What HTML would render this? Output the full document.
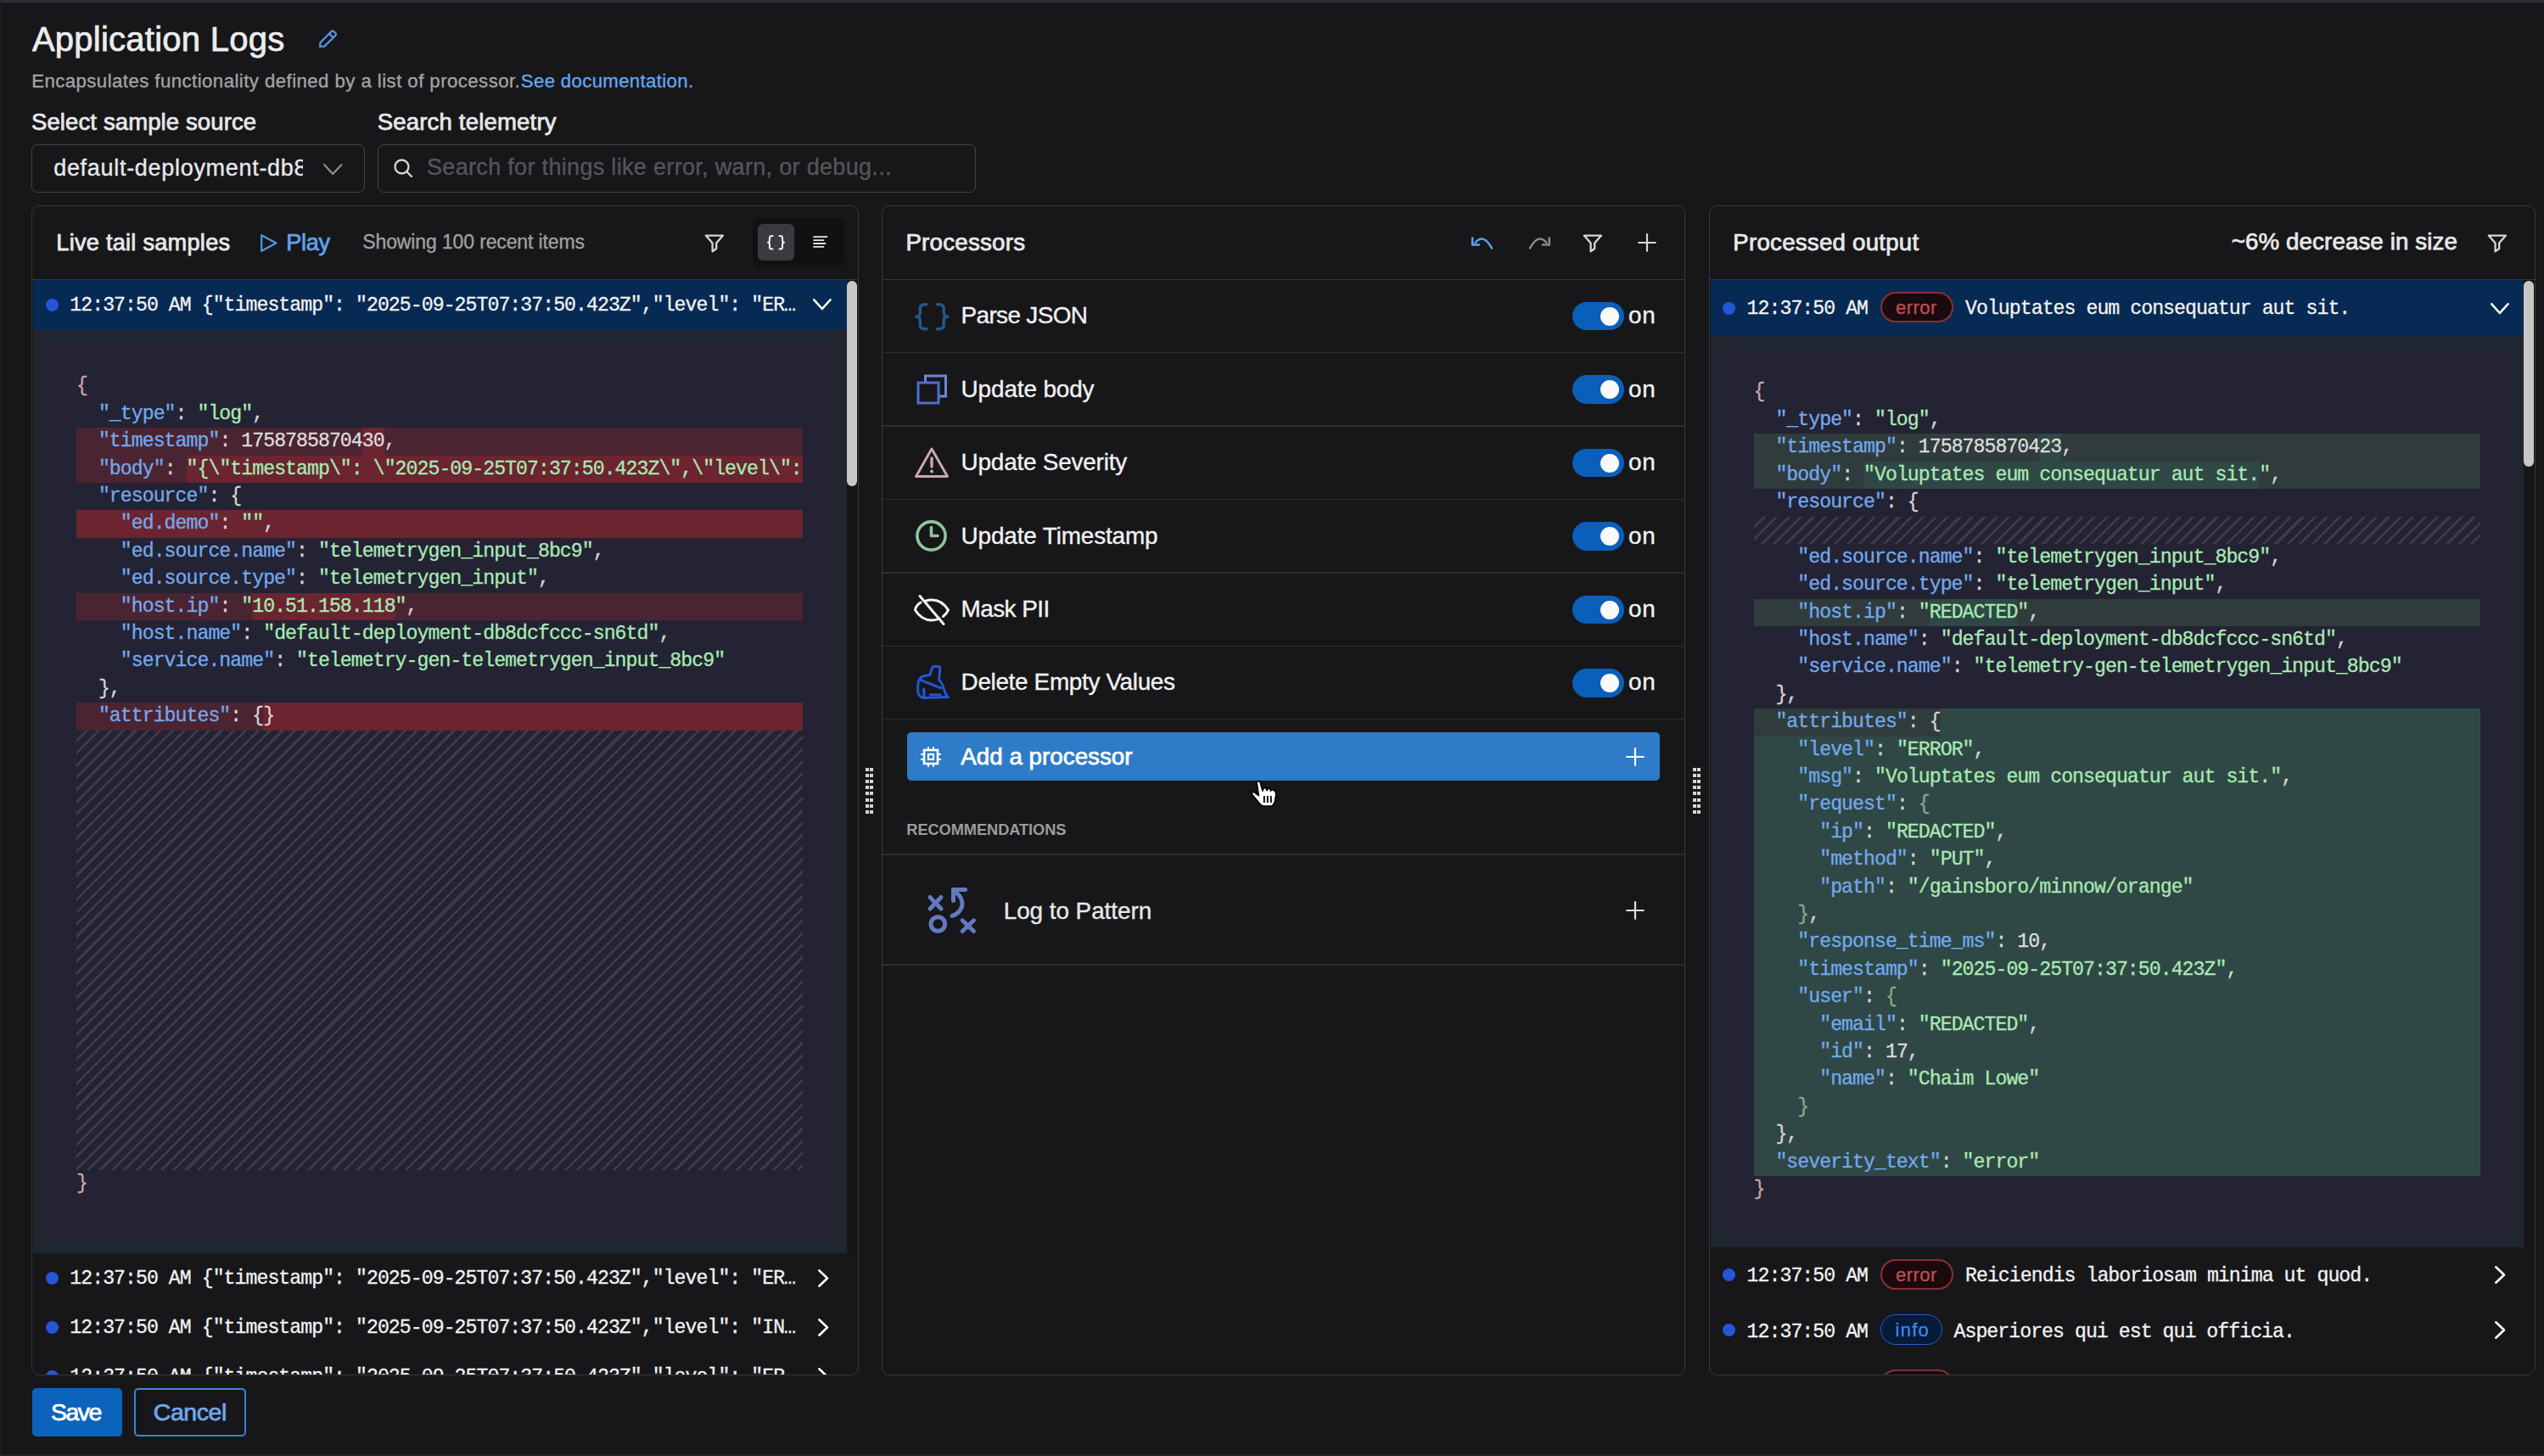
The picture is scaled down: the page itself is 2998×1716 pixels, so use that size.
<!DOCTYPE html>
<html><head><meta charset="utf-8"><title>Application Logs</title><style>
*{box-sizing:border-box}
html,body{margin:0;padding:0;width:2998px;height:1716px;overflow:hidden;background:#17171a}
body{position:relative;font-family:'Liberation Sans', sans-serif}
.t{position:absolute;line-height:0;white-space:pre;font-family:'Liberation Sans', sans-serif}
.m{position:absolute;line-height:0;white-space:pre;font-family:'Liberation Mono', monospace;font-size:23.2px;letter-spacing:-0.9639px;overflow:visible;-webkit-text-stroke:0.3px currentColor}
.br{color:#cfa6a6}
.hl{position:absolute}
.hatch{position:absolute;background:repeating-linear-gradient(135deg, transparent 0 7.2px, #3b3b4b 7.2px 10.2px)}
.box{position:absolute}
.ic{position:absolute;overflow:visible}
.dot{position:absolute;border-radius:50%;background:#2456d6}
.clip{position:absolute;overflow:hidden}
</style></head>
<body>
<div class=box style="left:0;top:0;width:2998px;height:2.5px;background:#2c3034"></div>
<div class=box style="left:0;top:0;width:1px;height:1716px;background:#222326"></div>
<div class=t style="left:37.90px;top:46.00px;font-size:40px;font-weight:400;letter-spacing:0.251px;color:#ececec;-webkit-text-stroke:0.75px #ececec;">Application Logs</div>
<svg class=ic style="left:374px;top:34px" width="25" height="24" viewBox="0 0 25 24"><path d="M3 21 L3.6 16 L16.5 3.1 Q18 1.8 19.4 3.1 L21.3 5 Q22.6 6.4 21.3 7.9 L8.3 20.6 Z M14 5.6 L18.8 10.4" fill="none" stroke="#4f95e4" stroke-width="2.2" stroke-linejoin="round"/></svg>
<div class=t style="left:37.20px;top:96.00px;font-size:22.2px;font-weight:400;letter-spacing:0.447px;color:#a3a3a3;-webkit-text-stroke:0.35px #a3a3a3;">Encapsulates functionality defined by a list of processor.</div>
<div class=t style="left:613.80px;top:96.00px;font-size:22.2px;font-weight:400;letter-spacing:0.347px;color:#62a6ef;-webkit-text-stroke:0.35px #62a6ef;">See documentation.</div>
<div class=t style="left:37.00px;top:144.00px;font-size:27.5px;font-weight:400;letter-spacing:0.115px;color:#e8e8e8;-webkit-text-stroke:0.75px #e8e8e8;">Select sample source</div>
<div class=t style="left:444.70px;top:144.00px;font-size:27.5px;font-weight:400;letter-spacing:0.199px;color:#e8e8e8;-webkit-text-stroke:0.75px #e8e8e8;">Search telemetry</div>
<div class=box style="left:37px;top:170px;width:393px;height:57px;border:1.6px solid #424347;border-radius:7px"></div>
<div class=clip style="left:0;top:0;width:357px;height:230px"><div class=t style="left:63.20px;top:198.00px;font-size:27px;font-weight:400;letter-spacing:0.700px;color:#e8e8e8;-webkit-text-stroke:0.35px #e8e8e8;">default-deployment-db8dcfccc</div></div>
<svg class=ic style="left:380.8px;top:193.4px" width="22.5" height="15" viewBox="0 0 22.5 15"><polyline points="1.2,1.2 11.25,12 21.3,1.2" fill="none" stroke="#8d8d8f" stroke-width="2.4" stroke-linecap="round" stroke-linejoin="round"/></svg>
<div class=box style="left:445px;top:170px;width:705px;height:57px;border:1.6px solid #424347;border-radius:7px"></div>
<svg class=ic style="left:463px;top:186px" width="25" height="25" viewBox="0 0 25 25"><circle cx="10.5" cy="10.5" r="8" fill="none" stroke="#d8d8d8" stroke-width="2.3"/><line x1="16.5" y1="16.5" x2="22" y2="22" stroke="#d8d8d8" stroke-width="2.3" stroke-linecap="round"/></svg>
<div class=t style="left:503.00px;top:197.00px;font-size:27px;font-weight:400;letter-spacing:0.320px;color:#54555a;-webkit-text-stroke:0.35px #54555a;">Search for things like error, warn, or debug...</div>
<div class=box style="left:37px;top:242px;width:974.5px;height:1379px;border:1.6px solid #36373b;border-radius:9px"></div>
<div class=box style="left:1039px;top:242px;width:947px;height:1379px;border:1.6px solid #36373b;border-radius:9px"></div>
<div class=box style="left:2014px;top:242px;width:973.5px;height:1379px;border:1.6px solid #36373b;border-radius:9px"></div>
<div class=box style="left:38px;top:328.6px;width:972.5px;height:1.6px;background:#36373b"></div>
<div class=box style="left:1040px;top:328.6px;width:945px;height:1.6px;background:#36373b"></div>
<div class=box style="left:2015px;top:328.6px;width:971.5px;height:1.6px;background:#36373b"></div>
<div class=t style="left:66.30px;top:286.00px;font-size:27.2px;font-weight:400;letter-spacing:0.239px;color:#e8e8e8;-webkit-text-stroke:0.75px #e8e8e8;">Live tail samples</div>
<svg class=ic style="left:306px;top:274.5px" width="22" height="23" viewBox="0 0 22 23"><path d="M2.2 2.2 L19.5 11.5 L2.2 20.8 Z" fill="none" stroke="#4f95e4" stroke-width="2.2" stroke-linejoin="round"/></svg>
<div class=t style="left:337.30px;top:286.00px;font-size:27.2px;font-weight:400;letter-spacing:-0.365px;color:#5ea2ef;-webkit-text-stroke:0.75px #5ea2ef;">Play</div>
<div class=t style="left:427.30px;top:285.00px;font-size:23px;font-weight:400;letter-spacing:-0.128px;color:#a0a0a0;-webkit-text-stroke:0.35px #a0a0a0;">Showing 100 recent items</div>
<svg class=ic style="left:830px;top:276px" width="24" height="22" viewBox="0 0 24 22"><path d="M1.8 1.6 L22 1.6 L14.2 10.5 L14.2 17 L9.6 20.3 L9.6 10.5 Z" fill="none" stroke="#d6d6d6" stroke-width="2.3" stroke-linejoin="round"/></svg>
<div class=box style="left:887px;top:257px;width:108px;height:58px;background:#111113;border-radius:8px"></div>
<div class=box style="left:893px;top:264px;width:43px;height:43px;background:#3a3b3f;border-radius:6px"></div>
<svg class=ic style="left:904.2px;top:277px" width="21" height="17.6" viewBox="0 0 21 17.6"><path d="M6.50 1.00 Q2.93 1.00 2.93 3.17 L2.93 6.34 Q2.93 8.80 1.00 8.80 Q2.93 8.80 2.93 11.26 L2.93 14.43 Q2.93 16.60 6.50 16.60 M14.50 1.00 Q18.07 1.00 18.07 3.17 L18.07 6.34 Q18.07 8.80 20.00 8.80 Q18.07 8.80 18.07 11.26 L18.07 14.43 Q18.07 16.60 14.50 16.60" fill="none" stroke="#f0f0f0" stroke-width="2.0" stroke-linecap="round" stroke-linejoin="round"/></svg>
<svg class=ic style="left:958px;top:278.4px" width="18" height="15" viewBox="0 0 18 15"><g stroke="#e6e6e6" stroke-width="1.8" stroke-linecap="round"><line x1="1" y1="1.2" x2="16.5" y2="1.2"/><line x1="1" y1="5.1" x2="12.5" y2="5.1"/><line x1="1" y1="9" x2="14.5" y2="9"/><line x1="1" y1="12.8" x2="12.5" y2="12.8"/></g></svg>
<div class=box style="left:38.6px;top:330.2px;width:959.4px;height:57.8px;background:#062a53"></div>
<div class=dot style="left:53.50px;top:351.70px;width:15.0px;height:15.0px"></div>
<div class=m style="left:82.30px;top:360.00px;color:#f2f2f2;">12:37:50 AM {&quot;timestamp&quot;: &quot;2025-09-25T07:37:50.423Z&quot;,&quot;level&quot;: &quot;ER…</div>
<svg class=ic style="left:958.4px;top:352px" width="21.8" height="15" viewBox="0 0 21.8 15"><polyline points="1.3,1.3 10.9,12 20.5,1.3" fill="none" stroke="#ffffff" stroke-width="2.6" stroke-linecap="round" stroke-linejoin="round"/></svg>
<div class=box style="left:38.6px;top:388px;width:959.4px;height:1089px;background:#1f2630"></div>
<div class=box style="left:52px;top:402px;width:932px;height:1058px;background:#232334"></div>
<div class=clip style="left:0;top:0;width:946px;height:1716px"><div class=hl style="left:90.00px;top:601.0px;width:856.00px;height:33.0px;background:#6b2430"></div>
<div class=hl style="left:90.00px;top:504.0px;width:856.00px;height:33.0px;background:#4b2431"></div>
<div class=hl style="left:426.92px;top:504.0px;width:25.92px;height:33.0px;background:#6b2430"></div>
<div class=hl style="left:90.00px;top:537.0px;width:856.00px;height:32.0px;background:#4b2431"></div>
<div class=hl style="left:219.58px;top:537.0px;width:726.42px;height:32.0px;background:#6b2430"></div>
<div class=hl style="left:90.00px;top:699.0px;width:856.00px;height:32.0px;background:#4b2431"></div>
<div class=hl style="left:297.33px;top:699.0px;width:168.46px;height:32.0px;background:#6b2430"></div>
<div class=hl style="left:90.00px;top:828.0px;width:856.00px;height:33.0px;background:#4b2431"></div>
<div class=hl style="left:310.29px;top:828.0px;width:635.71px;height:33.0px;background:#6b2430"></div>
<div class=hatch style="left:90.00px;top:860.60px;width:856.00px;height:518.40px"></div>
<div class=m style="left:90.00px;top:455.00px;width:856.00px"><span style="color:#cfa6a6">{</span></div>
<div class=m style="left:90.00px;top:488.00px;width:856.00px">  <span style="color:#74a8ec">&quot;_type&quot;</span><span style="color:#d4d4d4">:</span> <span style="color:#a9e9b3">&quot;log&quot;</span><span style="color:#d4d4d4">,</span></div>
<div class=m style="left:90.00px;top:520.00px;width:856.00px">  <span style="color:#74a8ec">&quot;timestamp&quot;</span><span style="color:#d4d4d4">:</span> <span style="color:#dcdcdc">1758785870430</span><span style="color:#d4d4d4">,</span></div>
<div class=m style="left:90.00px;top:553.00px;width:856.00px">  <span style="color:#74a8ec">&quot;body&quot;</span><span style="color:#d4d4d4">:</span> <span style="color:#a9e9b3">&quot;{\&quot;timestamp\&quot;: \&quot;2025-09-25T07:37:50.423Z\&quot;,\&quot;level\&quot;: \&quot;ERROR\&quot;}&quot;</span><span style="color:#d4d4d4">,</span></div>
<div class=m style="left:90.00px;top:585.00px;width:856.00px">  <span style="color:#74a8ec">&quot;resource&quot;</span><span style="color:#d4d4d4">:</span> <span style="color:#ddd0cf">{</span></div>
<div class=m style="left:90.00px;top:617.00px;width:856.00px">    <span style="color:#74a8ec">&quot;ed.demo&quot;</span><span style="color:#d4d4d4">:</span> <span style="color:#a9e9b3">&quot;&quot;</span><span style="color:#d4d4d4">,</span></div>
<div class=m style="left:90.00px;top:650.00px;width:856.00px">    <span style="color:#74a8ec">&quot;ed.source.name&quot;</span><span style="color:#d4d4d4">:</span> <span style="color:#a9e9b3">&quot;telemetrygen_input_8bc9&quot;</span><span style="color:#d4d4d4">,</span></div>
<div class=m style="left:90.00px;top:682.00px;width:856.00px">    <span style="color:#74a8ec">&quot;ed.source.type&quot;</span><span style="color:#d4d4d4">:</span> <span style="color:#a9e9b3">&quot;telemetrygen_input&quot;</span><span style="color:#d4d4d4">,</span></div>
<div class=m style="left:90.00px;top:715.00px;width:856.00px">    <span style="color:#74a8ec">&quot;host.ip&quot;</span><span style="color:#d4d4d4">:</span> <span style="color:#a9e9b3">&quot;10.51.158.118&quot;</span><span style="color:#d4d4d4">,</span></div>
<div class=m style="left:90.00px;top:747.00px;width:856.00px">    <span style="color:#74a8ec">&quot;host.name&quot;</span><span style="color:#d4d4d4">:</span> <span style="color:#a9e9b3">&quot;default-deployment-db8dcfccc-sn6td&quot;</span><span style="color:#d4d4d4">,</span></div>
<div class=m style="left:90.00px;top:779.00px;width:856.00px">    <span style="color:#74a8ec">&quot;service.name&quot;</span><span style="color:#d4d4d4">:</span> <span style="color:#a9e9b3">&quot;telemetry-gen-telemetrygen_input_8bc9&quot;</span></div>
<div class=m style="left:90.00px;top:812.00px;width:856.00px">  <span style="color:#ddd0cf">}</span><span style="color:#d4d4d4">,</span></div>
<div class=m style="left:90.00px;top:844.00px;width:856.00px">  <span style="color:#74a8ec">&quot;attributes&quot;</span><span style="color:#d4d4d4">:</span> <span style="color:#ddd0cf">{</span><span style="color:#ddd0cf">}</span></div>
<div class=m style="left:90.00px;top:1395.00px;width:856.00px"><span style="color:#cfa6a6">}</span></div></div>
<div class=box style="left:998px;top:330px;width:12px;height:1147px;background:#161618"></div>
<div class=box style="left:998px;top:330.5px;width:12px;height:242.5px;background:#c9c7c5;border-radius:6px"></div>
<div class=clip style="left:0;top:0;width:1011px;height:1619.5px">
<div class=dot style="left:53.50px;top:1498.50px;width:15.0px;height:15.0px"></div>
<div class=m style="left:82.30px;top:1507.00px;color:#f2f2f2;">12:37:50 AM {&quot;timestamp&quot;: &quot;2025-09-25T07:37:50.423Z&quot;,&quot;level&quot;: &quot;ER…</div>
<svg class=ic style="left:964px;top:1495.5px" width="13" height="21" viewBox="0 0 13 21"><polyline points="1.3,1.3 11,10.5 1.3,19.7" fill="none" stroke="#ffffff" stroke-width="2.6" stroke-linecap="round" stroke-linejoin="round"/></svg>
<div class=dot style="left:53.50px;top:1556.50px;width:15.0px;height:15.0px"></div>
<div class=m style="left:82.30px;top:1565.00px;color:#f2f2f2;">12:37:50 AM {&quot;timestamp&quot;: &quot;2025-09-25T07:37:50.423Z&quot;,&quot;level&quot;: &quot;IN…</div>
<svg class=ic style="left:964px;top:1553.5px" width="13" height="21" viewBox="0 0 13 21"><polyline points="1.3,1.3 11,10.5 1.3,19.7" fill="none" stroke="#ffffff" stroke-width="2.6" stroke-linecap="round" stroke-linejoin="round"/></svg>
<div class=dot style="left:53.50px;top:1614.50px;width:15.0px;height:15.0px"></div>
<div class=m style="left:82.30px;top:1623.00px;color:#f2f2f2;">12:37:50 AM {&quot;timestamp&quot;: &quot;2025-09-25T07:37:50.423Z&quot;,&quot;level&quot;: &quot;ER…</div>
<svg class=ic style="left:964px;top:1611.5px" width="13" height="21" viewBox="0 0 13 21"><polyline points="1.3,1.3 11,10.5 1.3,19.7" fill="none" stroke="#ffffff" stroke-width="2.6" stroke-linecap="round" stroke-linejoin="round"/></svg>
</div>
<div class=t style="left:1067.40px;top:286.00px;font-size:27.7px;font-weight:400;letter-spacing:0.241px;color:#e8e8e8;-webkit-text-stroke:0.75px #e8e8e8;">Processors</div>
<svg class=ic style="left:1733px;top:279px" width="28" height="16" viewBox="0 0 28 16"><path d="M5.5 7 Q15.5 -4.5 25 13.6" fill="none" stroke="#5ea2ef" stroke-width="2.4" stroke-linecap="round"/><path d="M2.2 1.5 L2.2 9.5 L10 9.5" fill="none" stroke="#5ea2ef" stroke-width="2.6" stroke-linecap="round" stroke-linejoin="round"/></svg>
<svg class=ic style="left:1800px;top:279px" width="28" height="16" viewBox="0 0 28 16"><path d="M22.5 7 Q12.5 -4.5 3 13.6" fill="none" stroke="#8a8a8a" stroke-width="2.4" stroke-linecap="round"/><path d="M25.8 1.5 L25.8 9.5 L18 9.5" fill="none" stroke="#8a8a8a" stroke-width="2.6" stroke-linecap="round" stroke-linejoin="round"/></svg>
<svg class=ic style="left:1865px;top:276px" width="24" height="22" viewBox="0 0 24 22"><path d="M1.8 1.6 L22 1.6 L14.2 10.5 L14.2 17 L9.6 20.3 L9.6 10.5 Z" fill="none" stroke="#d6d6d6" stroke-width="2.3" stroke-linejoin="round"/></svg>
<svg class=ic style="left:1930px;top:275px" width="22" height="22" viewBox="0 0 22 22"><g stroke="#d8d8d8" stroke-width="2.2" stroke-linecap="round"><line x1="11" y1="1.2" x2="11" y2="20.8"/><line x1="1.2" y1="11" x2="20.8" y2="11"/></g></svg>
<div class=box style="left:1040px;top:414.9px;width:945px;height:1.6px;background:#2d2e31"></div>
<div class=box style="left:1040px;top:501.3px;width:945px;height:1.6px;background:#2d2e31"></div>
<div class=box style="left:1040px;top:587.7px;width:945px;height:1.6px;background:#2d2e31"></div>
<div class=box style="left:1040px;top:674.1px;width:945px;height:1.6px;background:#2d2e31"></div>
<div class=box style="left:1040px;top:760.5px;width:945px;height:1.6px;background:#2d2e31"></div>
<div class=box style="left:1040px;top:846.9px;width:945px;height:1.6px;background:#2d2e31"></div>
<div class=t style="left:1132.60px;top:372.00px;font-size:27.9px;font-weight:400;letter-spacing:-0.639px;color:#f2f2f2;-webkit-text-stroke:0.35px #f2f2f2;">Parse JSON</div>
<div class=t style="left:1919.00px;top:372.00px;font-size:27.9px;font-weight:400;letter-spacing:0.789px;color:#f2f2f2;-webkit-text-stroke:0.35px #f2f2f2;">on</div>
<div class=box style="left:1853px;top:355.9px;width:60.5px;height:33.5px;border-radius:17px;background:#0a5fba"></div>
<div class=box style="left:1886px;top:361.7px;width:22px;height:22px;border-radius:50%;background:#fafafa"></div>
<div class=t style="left:1132.60px;top:459.00px;font-size:27.9px;font-weight:400;letter-spacing:-0.122px;color:#f2f2f2;-webkit-text-stroke:0.35px #f2f2f2;">Update body</div>
<div class=t style="left:1919.00px;top:459.00px;font-size:27.9px;font-weight:400;letter-spacing:0.789px;color:#f2f2f2;-webkit-text-stroke:0.35px #f2f2f2;">on</div>
<div class=box style="left:1853px;top:442.3px;width:60.5px;height:33.5px;border-radius:17px;background:#0a5fba"></div>
<div class=box style="left:1886px;top:448.1px;width:22px;height:22px;border-radius:50%;background:#fafafa"></div>
<div class=t style="left:1132.60px;top:545.00px;font-size:27.9px;font-weight:400;letter-spacing:-0.206px;color:#f2f2f2;-webkit-text-stroke:0.35px #f2f2f2;">Update Severity</div>
<div class=t style="left:1919.00px;top:545.00px;font-size:27.9px;font-weight:400;letter-spacing:0.789px;color:#f2f2f2;-webkit-text-stroke:0.35px #f2f2f2;">on</div>
<div class=box style="left:1853px;top:528.8px;width:60.5px;height:33.5px;border-radius:17px;background:#0a5fba"></div>
<div class=box style="left:1886px;top:534.6px;width:22px;height:22px;border-radius:50%;background:#fafafa"></div>
<div class=t style="left:1132.60px;top:632.00px;font-size:27.9px;font-weight:400;letter-spacing:-0.138px;color:#f2f2f2;-webkit-text-stroke:0.35px #f2f2f2;">Update Timestamp</div>
<div class=t style="left:1919.00px;top:632.00px;font-size:27.9px;font-weight:400;letter-spacing:0.789px;color:#f2f2f2;-webkit-text-stroke:0.35px #f2f2f2;">on</div>
<div class=box style="left:1853px;top:615.2px;width:60.5px;height:33.5px;border-radius:17px;background:#0a5fba"></div>
<div class=box style="left:1886px;top:621.0px;width:22px;height:22px;border-radius:50%;background:#fafafa"></div>
<div class=t style="left:1132.60px;top:718.00px;font-size:27.9px;font-weight:400;letter-spacing:-0.562px;color:#f2f2f2;-webkit-text-stroke:0.35px #f2f2f2;">Mask PII</div>
<div class=t style="left:1919.00px;top:718.00px;font-size:27.9px;font-weight:400;letter-spacing:0.789px;color:#f2f2f2;-webkit-text-stroke:0.35px #f2f2f2;">on</div>
<div class=box style="left:1853px;top:701.7px;width:60.5px;height:33.5px;border-radius:17px;background:#0a5fba"></div>
<div class=box style="left:1886px;top:707.5px;width:22px;height:22px;border-radius:50%;background:#fafafa"></div>
<div class=t style="left:1132.60px;top:804.00px;font-size:27.9px;font-weight:400;letter-spacing:-0.335px;color:#f2f2f2;-webkit-text-stroke:0.35px #f2f2f2;">Delete Empty Values</div>
<div class=t style="left:1919.00px;top:804.00px;font-size:27.9px;font-weight:400;letter-spacing:0.789px;color:#f2f2f2;-webkit-text-stroke:0.35px #f2f2f2;">on</div>
<div class=box style="left:1853px;top:788.2px;width:60.5px;height:33.5px;border-radius:17px;background:#0a5fba"></div>
<div class=box style="left:1886px;top:794.0px;width:22px;height:22px;border-radius:50%;background:#fafafa"></div>
<svg class=ic style="left:1077.5px;top:356.5px" width="40.5" height="32.5" viewBox="0 0 40.5 32.5"><path d="M14.00 1.70 Q6.30 1.70 6.30 5.85 L6.30 11.70 Q6.30 16.25 1.70 16.25 Q6.30 16.25 6.30 20.80 L6.30 26.65 Q6.30 30.80 14.00 30.80 M26.50 1.70 Q34.20 1.70 34.20 5.85 L34.20 11.70 Q34.20 16.25 38.80 16.25 Q34.20 16.25 34.20 20.80 L34.20 26.65 Q34.20 30.80 26.50 30.80" fill="none" stroke="#275789" stroke-width="3.4" stroke-linecap="round" stroke-linejoin="round"/></svg>
<svg class=ic style="left:1080px;top:441px" width="37" height="36" viewBox="0 0 37 36"><rect x="10.5" y="2" width="24" height="24" fill="none" stroke="#6d86d8" stroke-width="3"/><rect x="2" y="10" width="24" height="24" fill="#17171a" stroke="#4b6fd2" stroke-width="3"/></svg>
<svg class=ic style="left:1077px;top:526px" width="42" height="39" viewBox="0 0 42 39"><path d="M21 3 L39.5 35.5 L2.5 35.5 Z" fill="none" stroke="#c9a9a9" stroke-width="3" stroke-linejoin="round"/><line x1="21" y1="14" x2="21" y2="24" stroke="#c9a9a9" stroke-width="3.4" stroke-linecap="round"/><circle cx="21" cy="29.5" r="2" fill="#c9a9a9"/></svg>
<svg class=ic style="left:1078px;top:612px" width="39" height="39" viewBox="0 0 39 39"><circle cx="19.5" cy="19.5" r="16.6" fill="none" stroke="#8fc59c" stroke-width="3.6"/><path d="M19.5 9.5 L19.5 19.5 L27 19.5" fill="none" stroke="#8fc59c" stroke-width="3.6" stroke-linecap="round" stroke-linejoin="round"/></svg>
<svg class=ic style="left:1076px;top:700px" width="44" height="38" viewBox="0 0 44 38"><path d="M9 10 Q3 14 2.5 19 Q10 31 22 31 Q27 31 31 29" fill="none" stroke="#f2f2f2" stroke-width="3" stroke-linecap="round"/><path d="M15 8.2 Q18.5 7 22 7 Q34 7 41.5 19 Q39.5 23.5 35.5 26.5" fill="none" stroke="#f2f2f2" stroke-width="3" stroke-linecap="round"/><line x1="8" y1="2.5" x2="36" y2="35.5" stroke="#f2f2f2" stroke-width="3" stroke-linecap="round"/></svg>
<svg class=ic style="left:1079px;top:783px" width="41" height="42" viewBox="0 0 41 42"><path d="M21.5 2.4 L27.3 2.4 Q29 2.6 28.7 4.8 L27.6 18.3 Q31.5 21.5 33.8 30.5 Q35 35.5 38.3 38.6 L8.5 39.4 Q4.2 38.2 2.9 33 Q1.9 26 3.3 20.5 Q5 14.8 9.5 13.8 L16.8 12.6 L19.6 4.2 Q20.1 2.5 21.5 2.4 Z" fill="none" stroke="#2058d6" stroke-width="3" stroke-linejoin="round"/><path d="M5.2 18.2 L29.5 27.8" fill="none" stroke="#2058d6" stroke-width="3" stroke-linecap="round"/><path d="M9.8 29 L9.8 37" fill="none" stroke="#2058d6" stroke-width="3" stroke-linecap="round"/><path d="M17 35.8 L29.5 35.8" fill="none" stroke="#2058d6" stroke-width="2.6" stroke-linecap="round"/></svg>
<div class=box style="left:1069.3px;top:863.4px;width:886.7px;height:56.4px;background:#2e7bc8;border-radius:5px"></div>
<svg class=ic style="left:1084px;top:879px" width="26" height="26" viewBox="0 0 26 26"><rect x="5" y="5" width="16" height="16" fill="none" stroke="#fff" stroke-width="2.6"/><rect x="10" y="10" width="6" height="6" fill="none" stroke="#fff" stroke-width="2.2"/><g stroke="#fff" stroke-width="2"><line x1="10" y1="1" x2="10" y2="5"/><line x1="16" y1="1" x2="16" y2="5"/><line x1="10" y1="21" x2="10" y2="25"/><line x1="16" y1="21" x2="16" y2="25"/><line x1="1" y1="10" x2="5" y2="10"/><line x1="1" y1="16" x2="5" y2="16"/><line x1="21" y1="10" x2="25" y2="10"/><line x1="21" y1="16" x2="25" y2="16"/></g></svg>
<div class=t style="left:1132.30px;top:892.00px;font-size:27.7px;font-weight:400;letter-spacing:0.043px;color:#ffffff;-webkit-text-stroke:0.75px #ffffff;">Add a processor</div>
<svg class=ic style="left:1916px;top:881px" width="22" height="22" viewBox="0 0 22 22"><g stroke="#ffffff" stroke-width="2.2" stroke-linecap="round"><line x1="11" y1="1.2" x2="11" y2="20.8"/><line x1="1.2" y1="11" x2="20.8" y2="11"/></g></svg>
<div class=t style="left:1068.30px;top:978.00px;font-size:18.2px;font-weight:700;letter-spacing:-0.034px;color:#9c9c9c;">RECOMMENDATIONS</div>
<div class=box style="left:1040px;top:1006.2px;width:945px;height:1.6px;background:#2d2e31"></div>
<div class=box style="left:1040px;top:1136.2px;width:945px;height:1.6px;background:#2d2e31"></div>
<svg class=ic style="left:1092px;top:1045px" width="60" height="57" viewBox="0 0 60 57"><g stroke="#6479c0" stroke-width="5" stroke-linecap="round" stroke-linejoin="round" fill="none"><line x1="4" y1="12.5" x2="17" y2="26"/><line x1="17" y1="12.5" x2="4" y2="26"/><line x1="42.2" y1="39.8" x2="55.5" y2="52.5"/><line x1="55.5" y1="39.8" x2="42.2" y2="52.5"/><circle cx="13.3" cy="44" r="8.3"/><path d="M31.5 3.8 L38.5 10.5 Q43 16 41.5 23.5 Q39.5 31 30 34.5"/><path d="M31.5 16.5 L31.5 3.6 L45.5 3.6"/></g></svg>
<div class=t style="left:1182.70px;top:1074.00px;font-size:27.9px;font-weight:400;letter-spacing:-0.054px;color:#e8e8e8;-webkit-text-stroke:0.35px #e8e8e8;">Log to Pattern</div>
<svg class=ic style="left:1916px;top:1062px" width="22" height="22" viewBox="0 0 22 22"><g stroke="#e0e0e0" stroke-width="2.2" stroke-linecap="round"><line x1="11" y1="1.2" x2="11" y2="20.8"/><line x1="1.2" y1="11" x2="20.8" y2="11"/></g></svg>
<div class=box style="left:1019.8px;top:904.8px;width:4px;height:4px;background:#d6d6d6"></div><div class=box style="left:1025.1px;top:904.8px;width:4px;height:4px;background:#d6d6d6"></div><div class=box style="left:1019.8px;top:911.9px;width:4px;height:4px;background:#d6d6d6"></div><div class=box style="left:1025.1px;top:911.9px;width:4px;height:4px;background:#d6d6d6"></div><div class=box style="left:1019.8px;top:919.1px;width:4px;height:4px;background:#d6d6d6"></div><div class=box style="left:1025.1px;top:919.1px;width:4px;height:4px;background:#d6d6d6"></div><div class=box style="left:1019.8px;top:926.2px;width:4px;height:4px;background:#d6d6d6"></div><div class=box style="left:1025.1px;top:926.2px;width:4px;height:4px;background:#d6d6d6"></div><div class=box style="left:1019.8px;top:933.4px;width:4px;height:4px;background:#d6d6d6"></div><div class=box style="left:1025.1px;top:933.4px;width:4px;height:4px;background:#d6d6d6"></div><div class=box style="left:1019.8px;top:940.5px;width:4px;height:4px;background:#d6d6d6"></div><div class=box style="left:1025.1px;top:940.5px;width:4px;height:4px;background:#d6d6d6"></div><div class=box style="left:1019.8px;top:947.6px;width:4px;height:4px;background:#d6d6d6"></div><div class=box style="left:1025.1px;top:947.6px;width:4px;height:4px;background:#d6d6d6"></div><div class=box style="left:1019.8px;top:954.8px;width:4px;height:4px;background:#d6d6d6"></div><div class=box style="left:1025.1px;top:954.8px;width:4px;height:4px;background:#d6d6d6"></div>
<div class=box style="left:1994.8px;top:904.8px;width:4px;height:4px;background:#d6d6d6"></div><div class=box style="left:2000.1px;top:904.8px;width:4px;height:4px;background:#d6d6d6"></div><div class=box style="left:1994.8px;top:911.9px;width:4px;height:4px;background:#d6d6d6"></div><div class=box style="left:2000.1px;top:911.9px;width:4px;height:4px;background:#d6d6d6"></div><div class=box style="left:1994.8px;top:919.1px;width:4px;height:4px;background:#d6d6d6"></div><div class=box style="left:2000.1px;top:919.1px;width:4px;height:4px;background:#d6d6d6"></div><div class=box style="left:1994.8px;top:926.2px;width:4px;height:4px;background:#d6d6d6"></div><div class=box style="left:2000.1px;top:926.2px;width:4px;height:4px;background:#d6d6d6"></div><div class=box style="left:1994.8px;top:933.4px;width:4px;height:4px;background:#d6d6d6"></div><div class=box style="left:2000.1px;top:933.4px;width:4px;height:4px;background:#d6d6d6"></div><div class=box style="left:1994.8px;top:940.5px;width:4px;height:4px;background:#d6d6d6"></div><div class=box style="left:2000.1px;top:940.5px;width:4px;height:4px;background:#d6d6d6"></div><div class=box style="left:1994.8px;top:947.6px;width:4px;height:4px;background:#d6d6d6"></div><div class=box style="left:2000.1px;top:947.6px;width:4px;height:4px;background:#d6d6d6"></div><div class=box style="left:1994.8px;top:954.8px;width:4px;height:4px;background:#d6d6d6"></div><div class=box style="left:2000.1px;top:954.8px;width:4px;height:4px;background:#d6d6d6"></div>
<div class=t style="left:2042.30px;top:286.00px;font-size:27.7px;font-weight:400;letter-spacing:0.227px;color:#e8e8e8;-webkit-text-stroke:0.75px #e8e8e8;">Processed output</div>
<div class=t style="left:2629.80px;top:285.00px;font-size:27.7px;font-weight:400;letter-spacing:0.108px;color:#e8e8e8;-webkit-text-stroke:0.75px #e8e8e8;">~6% decrease in size</div>
<svg class=ic style="left:2931px;top:276px" width="24" height="22" viewBox="0 0 24 22"><path d="M1.8 1.6 L22 1.6 L14.2 10.5 L14.2 17 L9.6 20.3 L9.6 10.5 Z" fill="none" stroke="#d6d6d6" stroke-width="2.3" stroke-linejoin="round"/></svg>
<div class=box style="left:2015.6px;top:330.2px;width:958.4px;height:65.6px;background:#062a53"></div>
<div class=dot style="left:2029.50px;top:355.50px;width:15.0px;height:15.0px"></div>
<div class=m style="left:2058.60px;top:364.00px;color:#f2f2f2;">12:37:50 AM</div>
<div class=box style="left:2215.8px;top:344px;width:86.2px;height:35.8px;border-radius:18px;background:#1a0a0d;border:2px solid #8a2f35"></div>
<div class=t style="left:2234.00px;top:363.00px;font-size:22px;font-weight:400;letter-spacing:0.469px;color:#bf4d52;-webkit-text-stroke:0.35px #bf4d52;">error</div>
<div class=m style="left:2316.00px;top:364.00px;color:#f2f2f2;">Voluptates eum consequatur aut sit.</div>
<svg class=ic style="left:2935px;top:357px" width="21.8" height="15" viewBox="0 0 21.8 15"><polyline points="1.3,1.3 10.9,12 20.5,1.3" fill="none" stroke="#ffffff" stroke-width="2.6" stroke-linecap="round" stroke-linejoin="round"/></svg>
<div class=box style="left:2015.6px;top:395.8px;width:958.4px;height:1073.8px;background:#1f2630"></div>
<div class=box style="left:2029px;top:409.8px;width:931px;height:1045.8px;background:#232334"></div>
<div class=clip style="left:0;top:0;width:2922.7px;height:1716px"><div class=hl style="left:2066.50px;top:868.0px;width:856.20px;height:518.0px;background:#2f4845"></div>
<div class=hl style="left:2066.50px;top:511.0px;width:856.20px;height:33.0px;background:#2f3c3b"></div>
<div class=hl style="left:2403.42px;top:511.0px;width:25.92px;height:33.0px;background:#2f4845"></div>
<div class=hl style="left:2066.50px;top:544.0px;width:856.20px;height:32.0px;background:#2f3c3b"></div>
<div class=hl style="left:2196.08px;top:544.0px;width:466.50px;height:32.0px;background:#2f4845"></div>
<div class=hl style="left:2066.50px;top:706.0px;width:856.20px;height:32.0px;background:#2f3c3b"></div>
<div class=hl style="left:2273.83px;top:706.0px;width:103.67px;height:32.0px;background:#2f4845"></div>
<div class=hl style="left:2066.50px;top:835.0px;width:856.20px;height:33.0px;background:#2f3c3b"></div>
<div class=hl style="left:2286.79px;top:835.0px;width:635.91px;height:33.0px;background:#2f4845"></div>
<div class=hatch style="left:2066.50px;top:608.50px;width:856.20px;height:32.40px"></div>
<div class=m style="left:2066.50px;top:462.00px;width:856.20px"><span style="color:#cfa6a6">{</span></div>
<div class=m style="left:2066.50px;top:495.00px;width:856.20px">  <span style="color:#74a8ec">&quot;_type&quot;</span><span style="color:#d4d4d4">:</span> <span style="color:#a9e9b3">&quot;log&quot;</span><span style="color:#d4d4d4">,</span></div>
<div class=m style="left:2066.50px;top:527.00px;width:856.20px">  <span style="color:#74a8ec">&quot;timestamp&quot;</span><span style="color:#d4d4d4">:</span> <span style="color:#dcdcdc">1758785870423</span><span style="color:#d4d4d4">,</span></div>
<div class=m style="left:2066.50px;top:560.00px;width:856.20px">  <span style="color:#74a8ec">&quot;body&quot;</span><span style="color:#d4d4d4">:</span> <span style="color:#a9e9b3">&quot;Voluptates eum consequatur aut sit.&quot;</span><span style="color:#d4d4d4">,</span></div>
<div class=m style="left:2066.50px;top:592.00px;width:856.20px">  <span style="color:#74a8ec">&quot;resource&quot;</span><span style="color:#d4d4d4">:</span> <span style="color:#ddd0cf">{</span></div>
<div class=m style="left:2066.50px;top:657.00px;width:856.20px">    <span style="color:#74a8ec">&quot;ed.source.name&quot;</span><span style="color:#d4d4d4">:</span> <span style="color:#a9e9b3">&quot;telemetrygen_input_8bc9&quot;</span><span style="color:#d4d4d4">,</span></div>
<div class=m style="left:2066.50px;top:689.00px;width:856.20px">    <span style="color:#74a8ec">&quot;ed.source.type&quot;</span><span style="color:#d4d4d4">:</span> <span style="color:#a9e9b3">&quot;telemetrygen_input&quot;</span><span style="color:#d4d4d4">,</span></div>
<div class=m style="left:2066.50px;top:722.00px;width:856.20px">    <span style="color:#74a8ec">&quot;host.ip&quot;</span><span style="color:#d4d4d4">:</span> <span style="color:#a9e9b3">&quot;REDACTED&quot;</span><span style="color:#d4d4d4">,</span></div>
<div class=m style="left:2066.50px;top:754.00px;width:856.20px">    <span style="color:#74a8ec">&quot;host.name&quot;</span><span style="color:#d4d4d4">:</span> <span style="color:#a9e9b3">&quot;default-deployment-db8dcfccc-sn6td&quot;</span><span style="color:#d4d4d4">,</span></div>
<div class=m style="left:2066.50px;top:786.00px;width:856.20px">    <span style="color:#74a8ec">&quot;service.name&quot;</span><span style="color:#d4d4d4">:</span> <span style="color:#a9e9b3">&quot;telemetry-gen-telemetrygen_input_8bc9&quot;</span></div>
<div class=m style="left:2066.50px;top:819.00px;width:856.20px">  <span style="color:#ddd0cf">}</span><span style="color:#d4d4d4">,</span></div>
<div class=m style="left:2066.50px;top:851.00px;width:856.20px">  <span style="color:#74a8ec">&quot;attributes&quot;</span><span style="color:#d4d4d4">:</span> <span style="color:#ddd0cf">{</span></div>
<div class=m style="left:2066.50px;top:884.00px;width:856.20px">    <span style="color:#74a8ec">&quot;level&quot;</span><span style="color:#d4d4d4">:</span> <span style="color:#a9e9b3">&quot;ERROR&quot;</span><span style="color:#d4d4d4">,</span></div>
<div class=m style="left:2066.50px;top:916.00px;width:856.20px">    <span style="color:#74a8ec">&quot;msg&quot;</span><span style="color:#d4d4d4">:</span> <span style="color:#a9e9b3">&quot;Voluptates eum consequatur aut sit.&quot;</span><span style="color:#d4d4d4">,</span></div>
<div class=m style="left:2066.50px;top:948.00px;width:856.20px">    <span style="color:#74a8ec">&quot;request&quot;</span><span style="color:#d4d4d4">:</span> <span style="color:#8fa58e">{</span></div>
<div class=m style="left:2066.50px;top:981.00px;width:856.20px">      <span style="color:#74a8ec">&quot;ip&quot;</span><span style="color:#d4d4d4">:</span> <span style="color:#a9e9b3">&quot;REDACTED&quot;</span><span style="color:#d4d4d4">,</span></div>
<div class=m style="left:2066.50px;top:1013.00px;width:856.20px">      <span style="color:#74a8ec">&quot;method&quot;</span><span style="color:#d4d4d4">:</span> <span style="color:#a9e9b3">&quot;PUT&quot;</span><span style="color:#d4d4d4">,</span></div>
<div class=m style="left:2066.50px;top:1046.00px;width:856.20px">      <span style="color:#74a8ec">&quot;path&quot;</span><span style="color:#d4d4d4">:</span> <span style="color:#a9e9b3">&quot;/gainsboro/minnow/orange&quot;</span></div>
<div class=m style="left:2066.50px;top:1078.00px;width:856.20px">    <span style="color:#8fa58e">}</span><span style="color:#d4d4d4">,</span></div>
<div class=m style="left:2066.50px;top:1110.00px;width:856.20px">    <span style="color:#74a8ec">&quot;response_time_ms&quot;</span><span style="color:#d4d4d4">:</span> <span style="color:#dcdcdc">10</span><span style="color:#d4d4d4">,</span></div>
<div class=m style="left:2066.50px;top:1143.00px;width:856.20px">    <span style="color:#74a8ec">&quot;timestamp&quot;</span><span style="color:#d4d4d4">:</span> <span style="color:#a9e9b3">&quot;2025-09-25T07:37:50.423Z&quot;</span><span style="color:#d4d4d4">,</span></div>
<div class=m style="left:2066.50px;top:1175.00px;width:856.20px">    <span style="color:#74a8ec">&quot;user&quot;</span><span style="color:#d4d4d4">:</span> <span style="color:#8fa58e">{</span></div>
<div class=m style="left:2066.50px;top:1208.00px;width:856.20px">      <span style="color:#74a8ec">&quot;email&quot;</span><span style="color:#d4d4d4">:</span> <span style="color:#a9e9b3">&quot;REDACTED&quot;</span><span style="color:#d4d4d4">,</span></div>
<div class=m style="left:2066.50px;top:1240.00px;width:856.20px">      <span style="color:#74a8ec">&quot;id&quot;</span><span style="color:#d4d4d4">:</span> <span style="color:#dcdcdc">17</span><span style="color:#d4d4d4">,</span></div>
<div class=m style="left:2066.50px;top:1272.00px;width:856.20px">      <span style="color:#74a8ec">&quot;name&quot;</span><span style="color:#d4d4d4">:</span> <span style="color:#a9e9b3">&quot;Chaim Lowe&quot;</span></div>
<div class=m style="left:2066.50px;top:1305.00px;width:856.20px">    <span style="color:#8fa58e">}</span></div>
<div class=m style="left:2066.50px;top:1337.00px;width:856.20px">  <span style="color:#ddd0cf">}</span><span style="color:#d4d4d4">,</span></div>
<div class=m style="left:2066.50px;top:1370.00px;width:856.20px">  <span style="color:#74a8ec">&quot;severity_text&quot;</span><span style="color:#d4d4d4">:</span> <span style="color:#a9e9b3">&quot;error&quot;</span></div>
<div class=m style="left:2066.50px;top:1402.00px;width:856.20px"><span style="color:#cfa6a6">}</span></div></div>
<div class=box style="left:2974px;top:330px;width:12.6px;height:1139.6px;background:#161618"></div>
<div class=box style="left:2974px;top:330.5px;width:12.4px;height:219.5px;background:#c9c7c5;border-radius:6px"></div>
<div class=clip style="left:0;top:0;width:2998px;height:1619.5px">
<div class=dot style="left:2029.50px;top:1494.50px;width:15.0px;height:15.0px"></div>
<div class=m style="left:2058.60px;top:1504.00px;color:#f2f2f2;">12:37:50 AM</div>
<div class=box style="left:2215.5px;top:1484.0px;width:86.5px;height:36px;border-radius:18px;background:#1a0a0d;border:2px solid #8a2f35"></div>
<div class=t style="left:2234.00px;top:1503.00px;font-size:22px;font-weight:400;letter-spacing:0.469px;color:#bf4d52;-webkit-text-stroke:0.35px #bf4d52;">error</div>
<div class=m style="left:2316.00px;top:1504.00px;color:#f2f2f2;">Reiciendis laboriosam minima ut quod.</div>
<svg class=ic style="left:2940px;top:1491.5px" width="13" height="21" viewBox="0 0 13 21"><polyline points="1.3,1.3 11,10.5 1.3,19.7" fill="none" stroke="#ffffff" stroke-width="2.6" stroke-linecap="round" stroke-linejoin="round"/></svg>
<div class=dot style="left:2029.50px;top:1559.50px;width:15.0px;height:15.0px"></div>
<div class=m style="left:2058.60px;top:1570.00px;color:#f2f2f2;">12:37:50 AM</div>
<div class=box style="left:2215.5px;top:1549.0px;width:73.4px;height:36px;border-radius:18px;background:#061a3a;border:1.8px solid #1f5fcf"></div>
<div class=t style="left:2233.50px;top:1568.00px;font-size:22px;font-weight:400;letter-spacing:1.255px;color:#3d86ea;-webkit-text-stroke:0.35px #3d86ea;">info</div>
<div class=m style="left:2302.50px;top:1570.00px;color:#f2f2f2;">Asperiores qui est qui officia.</div>
<svg class=ic style="left:2940px;top:1556.5px" width="13" height="21" viewBox="0 0 13 21"><polyline points="1.3,1.3 11,10.5 1.3,19.7" fill="none" stroke="#ffffff" stroke-width="2.6" stroke-linecap="round" stroke-linejoin="round"/></svg>
<div class=dot style="left:2029.50px;top:1624.50px;width:15.0px;height:15.0px"></div>
<div class=m style="left:2058.60px;top:1634.00px;color:#f2f2f2;">12:37:50 AM</div>
<div class=box style="left:2215.5px;top:1614.0px;width:86.5px;height:36px;border-radius:18px;background:#1a0a0d;border:2px solid #8a2f35"></div>
<div class=m style="left:2316.00px;top:1634.00px;color:#f2f2f2;"></div>
<svg class=ic style="left:2940px;top:1621.5px" width="13" height="21" viewBox="0 0 13 21"><polyline points="1.3,1.3 11,10.5 1.3,19.7" fill="none" stroke="#ffffff" stroke-width="2.6" stroke-linecap="round" stroke-linejoin="round"/></svg>
</div>
<div class=box style="left:37.5px;top:1636px;width:106px;height:57px;background:#0b63bb;border-radius:5px"></div>
<div class=t style="left:60.00px;top:1664.00px;font-size:28.5px;font-weight:400;letter-spacing:-1.537px;color:#ffffff;-webkit-text-stroke:0.75px #ffffff;">Save</div>
<div class=box style="left:157.5px;top:1636px;width:132.5px;height:57px;border:2px solid #3d82d6;border-radius:5px"></div>
<div class=t style="left:180.80px;top:1664.00px;font-size:28.5px;font-weight:400;letter-spacing:-0.437px;color:#6fa8ea;-webkit-text-stroke:0.75px #6fa8ea;">Cancel</div>
<div class=box style="left:0;top:1714px;width:2998px;height:2px;background:#222326"></div>
<svg class=ic style="left:1470px;top:915px" width="40" height="40" viewBox="0 0 40 40"><path d="M11 7.5 Q12.5 4 15 6.5 L18 17 L18.5 15 Q20 12.5 22 14 L23 16.5 Q24 13.5 26.5 14.5 L27.5 17 Q28.5 15 31 16 L32.2 17 Q34.2 18.5 33.8 22 L32.3 30 Q30.8 34.8 27.3 35.2 L18.8 35.2 Q15.7 34.2 13.7 31.2 L5.5 21.2 Q4.5 18.2 7.8 18.2 L13.2 22.5 Z" fill="#fff" stroke="#000" stroke-width="1.8" stroke-linejoin="round"/><g stroke="#000" stroke-width="1.9"><line x1="19.8" y1="23" x2="19.8" y2="31"/><line x1="23.8" y1="23" x2="23.8" y2="31"/><line x1="27.8" y1="23" x2="27.8" y2="31"/></g></svg>
</body></html>
